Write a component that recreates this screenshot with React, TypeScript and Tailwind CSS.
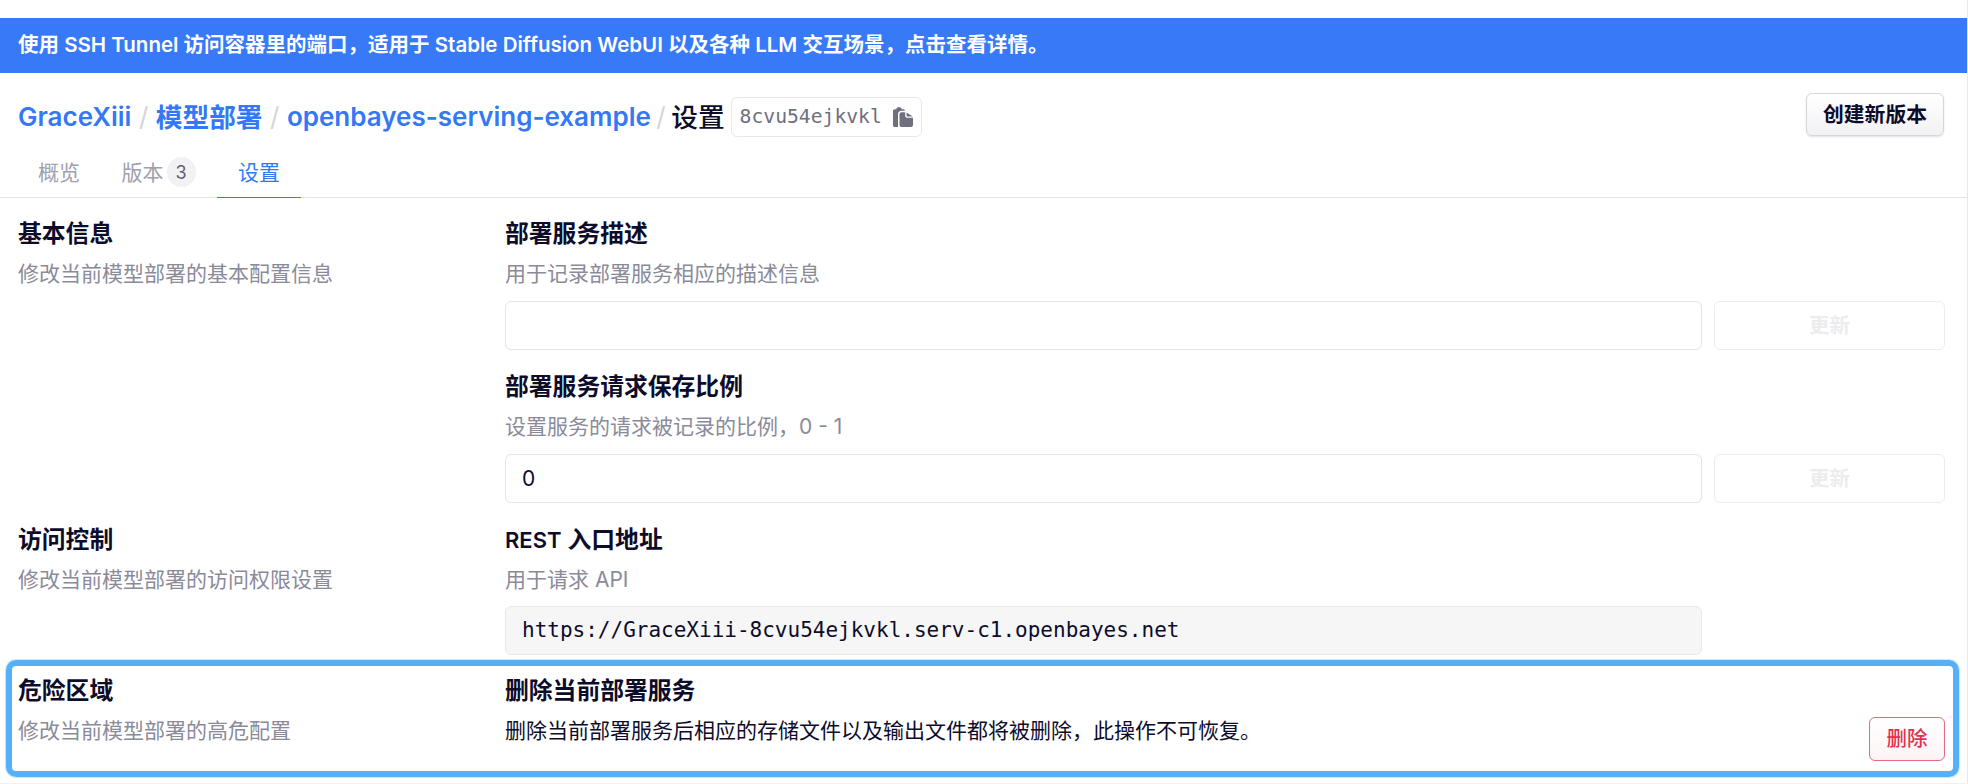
const cjk = "font-['Inter','Noto_Sans_CJK_SC',sans-serif]";

function SectionTitle({ children }: { children: React.ReactNode }) {
  return <h3 className="text-[23.8px] leading-[32px] font-semibold text-[#0d0c2b]">{children}</h3>;
}

function SectionDesc({ children }: { children: React.ReactNode }) {
  return <p className="mt-2 text-[21px] leading-[32px] text-[#8a8a99]">{children}</p>;
}

function InputRow({ value }: { value?: string }) {
  return (
    <div className="mt-[11px] flex gap-3 pb-[21px]">
      <div className="h-[49px] w-[1197px] rounded-md border border-[#e3e3e8] bg-white px-4 text-[21px] leading-[48px] text-[#0d0c2b]">
        {value}
      </div>
      <button className="h-[49px] w-[231px] rounded-md border border-[#ededf0] bg-white pt-px text-[20.5px] font-semibold text-[#ececef]">
        更新
      </button>
    </div>
  );
}

export default function App() {
  return (
    <div className={`${cjk} relative h-[784px] w-[1968px] overflow-hidden border-b border-[#f0f0f2] bg-white`}>
      <div className="h-[18px]" />
      <div className="flex h-[55px] items-center bg-[#3879f8] px-[18px] text-[20.5px] font-semibold text-white">
        使用 SSH Tunnel 访问容器里的端口，适用于 Stable Diffusion WebUI 以及各种 LLM 交互场景，点击查看详情。
      </div>

      <div className="flex h-[64px] items-end justify-between pr-6 pl-[18px]">
        <div className="flex items-center text-[26px] leading-[38px] font-semibold">
          <a className="text-[#3578f6]">GraceXiii</a>
          <span className="mx-[7.5px] font-normal text-[#d5d5db]">/</span>
          <a className="text-[26.7px] text-[#3578f6]">模型部署</a>
          <span className="mx-[7.5px] font-normal text-[#d5d5db]">/</span>
          <a className="text-[#3578f6]">openbayes-serving-example</a>
          <span className="mx-[5.5px] font-normal text-[#d5d5db]">/</span>
          <span className="text-[26.7px] font-medium text-[#0d0c2b]">设置</span>
          <div className="ml-[6px] flex h-[40px] items-center gap-[11px] rounded-md border border-[#e8e8ec] bg-white px-2 font-['DejaVu_Sans_Mono',monospace] text-[19.7px] font-normal text-[#6f6f80]">
            8cvu54ejkvkl
            <svg width="20" height="20" viewBox="0 0 20 20" fill="#6f6f80">
              <path d="M0 4C0 3 .8 2.2 1.8 2.2h1.4C3.5 1 4.6 0 6 0s2.5 1 2.8 2.2h1.4c1 0 1.7.7 1.8 1.6H8.5C6.500 3.800 5 5.300 5 7.300V20H1.800C.8 20 0 19.200 0 18.200V4z" />
              <path d="M8.500 5.200h3.700v3.600c0 1.100.9 2 2 2H20v7.200c0 1.100-.9 2-2 2H8.500c-1.100 0-2-.9-2-2V7.200c0-1.100.9-2 2-2zM13.600 5.400l6.200 4H14.300c-.4 0-.7-.3-.7-.7V5.400z" />
            </svg>
          </div>
        </div>
        <button className="mb-[1px] h-[43px] w-[138px] rounded-md border border-[#d5d5db] bg-gradient-to-b from-white to-[#f2f2f5] text-[20.8px] font-semibold text-[#0d0c2b] shadow-[0_1px_2px_rgba(0,0,0,0.12)]">
          创建新版本
        </button>
      </div>

      <div className="mt-[15px] flex h-[46px] border-b border-[#e3e3e8] pl-[18px] text-[21px] text-[#a0a0ab]">
        <div className="flex w-[84px] items-start justify-center pt-[5px] pr-[2px]">概览</div>
        <div className="flex w-[115px] items-start justify-center pt-[5px] pr-[2px]">
          版本
          <span className="ml-[3px] flex h-[30px] w-[29px] items-center justify-center rounded-full bg-[#f2f2f5] text-[18px] text-[#5f5f73]">
            3
          </span>
        </div>
        <div className="-mb-px flex w-[84px] items-start justify-center border-b border-[#3578f6] pt-[5px] text-[#3578f6]">
          设置
        </div>
      </div>

      <div className="grid grid-cols-[487px_1fr] pt-5 pr-6 pl-[18px]">
        <div>
          <SectionTitle>基本信息</SectionTitle>
          <SectionDesc>修改当前模型部署的基本配置信息</SectionDesc>
        </div>
        <div>
          <SectionTitle>部署服务描述</SectionTitle>
          <SectionDesc>用于记录部署服务相应的描述信息</SectionDesc>
          <InputRow />
          <SectionTitle>部署服务请求保存比例</SectionTitle>
          <SectionDesc>设置服务的请求被记录的比例，0 - 1</SectionDesc>
          <InputRow value="0" />
        </div>

        <div>
          <SectionTitle>访问控制</SectionTitle>
          <SectionDesc>修改当前模型部署的访问权限设置</SectionDesc>
        </div>
        <div>
          <SectionTitle>
            <span className="text-[22px]">REST</span> 入口地址
          </SectionTitle>
          <SectionDesc>用于请求 API</SectionDesc>
          <div className="mt-[10px] mb-5 h-[49px] w-[1197px] rounded-md border border-[#e8e8ec] bg-[#f6f6f7] px-4 font-['DejaVu_Sans_Mono',monospace] text-[21px] leading-[47px] text-[#0d0c2b]">
            https://GraceXiii-8cvu54ejkvkl.serv-c1.openbayes.net
          </div>
        </div>

        <div>
          <SectionTitle>危险区域</SectionTitle>
          <SectionDesc>修改当前模型部署的高危配置</SectionDesc>
        </div>
        <div className="flex items-end justify-between">
          <div>
            <SectionTitle>删除当前部署服务</SectionTitle>
            <p className="mt-2 mb-[12px] text-[21px] leading-[32px] text-[#0d0c2b]">
              删除当前部署服务后相应的存储文件以及输出文件都将被删除，此操作不可恢复。
            </p>
          </div>
          <button className="mb-[-2px] h-[44px] w-[76px] rounded-md border border-[#e8687f] bg-gradient-to-b from-white to-[#fdf3f5] text-[20.5px] font-medium text-[#e0334f]">
            删除
          </button>
        </div>
      </div>

      {/* highlight frame drawn over the danger section */}
      <div className="pointer-events-none absolute top-[660px] left-[6px] h-[117px] w-[1953px] rounded-[10px] border-[6px] border-[#54b0f8] shadow-[0_0_0_1px_rgba(84,176,248,0.3)]" />
      <div className="absolute top-0 right-0 h-full w-px bg-[#e8e8ec]" />
    </div>
  );
}
